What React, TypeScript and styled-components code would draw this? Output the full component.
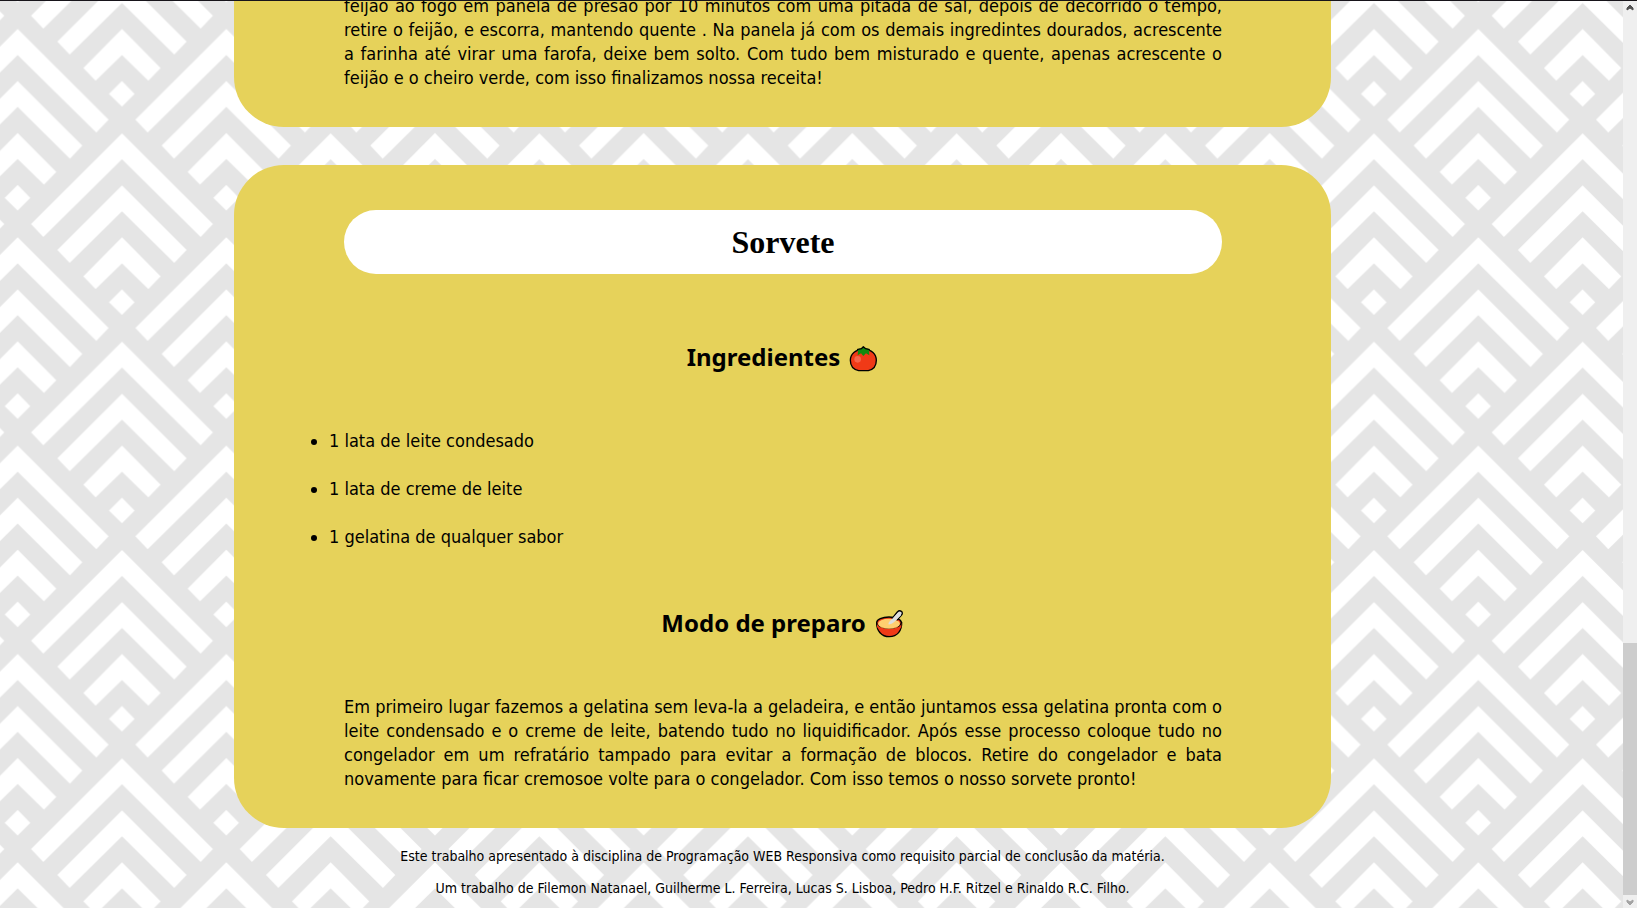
import React from 'react';
import styled, { createGlobalStyle } from 'styled-components';

const GlobalStyle = createGlobalStyle`
  *, *::before, *::after { box-sizing: border-box; }
  body { margin: 0; background: #fff; }
`;

const sans = `Tahoma, "DejaVu Sans Condensed", "Noto Sans", sans-serif`;

const Shell = styled.div`
  position: relative;
  isolation: isolate;
  display: grid;
  grid-template-columns: minmax(0, 1fr) 14px;
  grid-template-rows: minmax(0, 1fr);
  height: 100vh;
  overflow: hidden;
  border-top: 1px solid #17141a;
  color: #000;
  font-family: ${sans};
`;

const Backdrop = styled.svg`
  position: absolute;
  inset: 0;
  z-index: -1;
  width: 100%;
  height: 100%;
`;

const Viewport = styled.div`
  display: flex;
  flex-direction: column;
  justify-content: flex-end;
  min-width: 0;
  overflow: hidden;
  padding: 0 292px 0 234px;
`;

const Recipes = styled.main`
  display: flex;
  flex-direction: column;
  gap: 38px;
`;

const Card = styled.article<{ $continued?: boolean }>`
  padding: ${(p) => (p.$continued ? '0 109px 37px 110px' : '45px 109px 37px 110px')};
  border-radius: ${(p) => (p.$continued ? '0 0 50px 50px' : '50px')};
  background: #e6d25a;
`;

const RecipeTitle = styled.h2`
  margin: 0 0 67px;
  border-radius: 32px;
  background: #fff;
  font: bold 32px/64px "Times New Roman", "Liberation Serif", serif;
  text-align: center;
`;

const SectionTitle = styled.h3`
  display: flex;
  align-items: center;
  justify-content: center;
  gap: 9px;
  margin: 0 0 56px;
  font: bold 24px/32px Tahoma, "Noto Sans", sans-serif;
`;

const Emoji = styled.svg`
  flex: none;
  width: 30px;
  height: 30px;
`;

const Ingredients = styled.ul`
  display: grid;
  gap: 24px;
  margin: 0 0 58px -15px;
  padding: 0;
  font-size: 18px;
  line-height: 24px;
`;

const Steps = styled.p`
  margin: 0;
  font-size: 18px;
  line-height: 24px;
  text-align: justify;
`;

const Credits = styled.footer`
  display: grid;
  gap: 16px;
  padding: 20px 0 12px;
  font-size: 14px;
  line-height: 16px;
  text-align: center;
`;

const CreditLine = styled.p`
  margin: 0;
`;

const ScrollBar = styled.div`
  display: flex;
  flex-direction: column;
  background: #efefef;
`;

const ScrollButton = styled.button`
  display: grid;
  place-items: center;
  width: 14px;
  height: 13px;
  padding: 0;
  border: 0;
  background: transparent;
`;

const Track = styled.div`
  display: grid;
  flex: 1;
  grid-template-rows: 629fr 252fr;
`;

const Thumb = styled.div`
  grid-row: 2;
  background: #cdcdcd;
`;

const chevrons =
  'M0 0L273 272L236 311L0 78L-236 311L-273 272Z' +
  'M0 156L194 350L157 389L0 234L-157 389L-194 350Z' +
  'M0 312L116 429L79 467L0 390L-79 467L-116 429Z' +
  'M0 468L38 507L0 545L-39 507Z';

const tileOrigins = [
  [313, 0],
  [0, 312],
  [626, 312],
  [0, -313],
  [626, -313],
];

function ChevronBackdrop() {
  return (
    <Backdrop aria-hidden="true">
      <defs>
        <pattern
          id="chevrons"
          x="53"
          y="397"
          width="626"
          height="625"
          patternUnits="userSpaceOnUse"
          patternTransform="scale(0.33333)"
        >
          <rect width="626" height="625" fill="#e5e5e5" />
          {tileOrigins.map(([x, y]) => (
            <path key={`${x},${y}`} d={chevrons} fill="#fff" transform={`translate(${x} ${y})`} />
          ))}
        </pattern>
      </defs>
      <rect width="100%" height="100%" fill="url(#chevrons)" />
    </Backdrop>
  );
}

function Tomato() {
  return (
    <Emoji viewBox="0 -6 90 90" role="img" aria-label="Tomate">
      <path
        d="M29 80C14 77 4 66 4 49C4 30 19 16 44 16C68 16 82 30 82 49C82 66 72 77 58 80Z"
        fill="#f03a17"
        stroke="#000"
        strokeWidth="4"
        strokeLinejoin="round"
      />
      <circle cx="26" cy="46" r="10" fill="#f4654b" />
      <path
        d="M24 16L38 13L43 8L49 13L63 16L60 21L61 34L51 28L43 36L36 28L26 34L27 21Z"
        fill="#128a0e"
      />
      <path d="M24 17L37 14L43 8L50 14L62 17" fill="none" stroke="#000" strokeWidth="4" strokeLinejoin="round" />
    </Emoji>
  );
}

function Bowl() {
  return (
    <Emoji viewBox="0 -3 90 90" role="img" aria-label="Tigela com colher">
      <path
        d="M5 42C5 65 19 83 43 83C67 83 81 65 80 40Z"
        fill="#f03a17"
        stroke="#000"
        strokeWidth="4"
        strokeLinejoin="round"
      />
      <ellipse cx="42" cy="41" rx="37" ry="17" fill="#f03a17" stroke="#000" strokeWidth="4" />
      <path d="M6 42C8 68 78 68 79 42L79 54L70 66H15L6 54Z" fill="#f03a17" />
      <ellipse cx="42" cy="44" rx="33" ry="15" fill="#ffcf70" />
      <path d="M14 51Q42 66 70 51Q64 59 42 59Q20 59 14 51Z" fill="#f7a94a" />
      <path d="M51 29L67 9Q73 3 79 7Q85 12 79 19L65 34" fill="#dedede" stroke="#000" strokeWidth="4" strokeLinejoin="round" />
      <path d="M40 46C40 39 47 34 52 29L69 11L78 19L60 37C53 44 47 47 40 46Z" fill="#dedede" />
    </Emoji>
  );
}

export default function App() {
  return (
    <Shell>
      <GlobalStyle />
      <ChevronBackdrop />
      <Viewport>
        <Recipes>
          <Card $continued>
            <Steps>
              feijão ao fogo em panela de presão por 10 minutos com uma pitada de sal, depois de
              decorrido o tempo, retire o feijão, e escorra, mantendo quente . Na panela já com os
              demais ingredintes dourados, acrescente a farinha até virar uma farofa, deixe bem
              solto. Com tudo bem misturado e quente, apenas acrescente o feijão e o cheiro verde,
              com isso finalizamos nossa receita!
            </Steps>
          </Card>
          <Card>
            <RecipeTitle>Sorvete</RecipeTitle>
            <SectionTitle>
              Ingredientes <Tomato />
            </SectionTitle>
            <Ingredients>
              <li>1 lata de leite condesado</li>
              <li>1 lata de creme de leite</li>
              <li>1 gelatina de qualquer sabor</li>
            </Ingredients>
            <SectionTitle>
              Modo de preparo <Bowl />
            </SectionTitle>
            <Steps>
              Em primeiro lugar fazemos a gelatina sem leva-la a geladeira, e então juntamos essa
              gelatina pronta com o leite condensado e o creme de leite, batendo tudo no
              liquidificador. Após esse processo coloque tudo no congelador em um refratário
              tampado para evitar a formação de blocos. Retire do congelador e bata novamente para
              ficar cremosoe volte para o congelador. Com isso temos o nosso sorvete pronto!
            </Steps>
          </Card>
        </Recipes>
        <Credits>
          <CreditLine>
            Este trabalho apresentado à disciplina de Programação WEB Responsiva como requisito
            parcial de conclusão da matéria.
          </CreditLine>
          <CreditLine>
            Um trabalho de Filemon Natanael, Guilherme L. Ferreira, Lucas S. Lisboa, Pedro H.F.
            Ritzel e Rinaldo R.C. Filho.
          </CreditLine>
        </Credits>
      </Viewport>
      <ScrollBar>
        <ScrollButton type="button" aria-label="Rolar para cima">
          <svg width="8" height="8" viewBox="0 0 8 8">
            <path d="M1 6V4L4 1L7 4V6L4 4Z" fill="#505050" stroke="#505050" />
          </svg>
        </ScrollButton>
        <Track>
          <Thumb />
        </Track>
        <ScrollButton type="button" aria-label="Rolar para baixo">
          <svg width="8" height="8" viewBox="0 0 8 8">
            <path d="M1 2V4L4 7L7 4V2L4 4Z" fill="#a3a3a3" stroke="#a3a3a3" />
          </svg>
        </ScrollButton>
      </ScrollBar>
    </Shell>
  );
}
